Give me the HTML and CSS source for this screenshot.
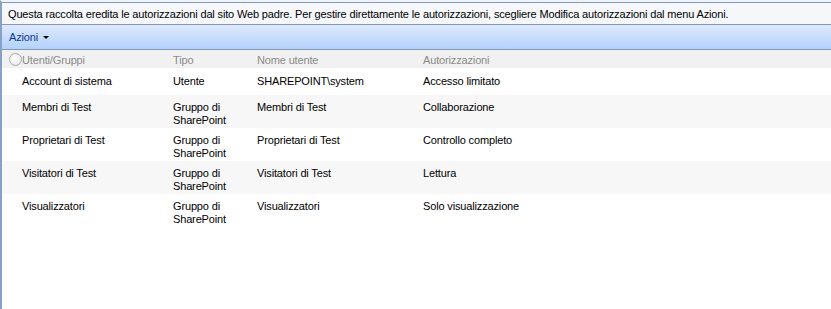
FILE: index.html
```html
<!DOCTYPE html>
<html lang="it">
<head>
<meta charset="utf-8">
<title>Autorizzazioni</title>
<link rel="stylesheet" href="styles.css">
</head>
<body>
<div class="page">
  <div class="info">Questa raccolta eredita le autorizzazioni dal sito Web padre. Per gestire direttamente le autorizzazioni, scegliere Modifica autorizzazioni dal menu Azioni.</div>
  <div class="toolbar"><span class="menu">Azioni <span class="caret"></span></span></div>
  <div class="table">
    <div class="row head">
      <div class="c1"><span class="radio"></span>Utenti/Gruppi</div>
      <div>Tipo</div>
      <div>Nome utente</div>
      <div>Autorizzazioni</div>
    </div>
    <div class="row first">
      <div class="c1">Account di sistema</div>
      <div>Utente</div>
      <div>SHAREPOINT\system</div>
      <div>Accesso limitato</div>
    </div>
    <div class="row alt">
      <div class="c1">Membri di Test</div>
      <div>Gruppo di<br>SharePoint</div>
      <div>Membri di Test</div>
      <div>Collaborazione</div>
    </div>
    <div class="row">
      <div class="c1">Proprietari di Test</div>
      <div>Gruppo di<br>SharePoint</div>
      <div>Proprietari di Test</div>
      <div>Controllo completo</div>
    </div>
    <div class="row alt">
      <div class="c1">Visitatori di Test</div>
      <div>Gruppo di<br>SharePoint</div>
      <div>Visitatori di Test</div>
      <div>Lettura</div>
    </div>
    <div class="row">
      <div class="c1">Visualizzatori</div>
      <div>Gruppo di<br>SharePoint</div>
      <div>Visualizzatori</div>
      <div>Solo visualizzazione</div>
    </div>
  </div>
</div>
</body>
</html>
```
FILE: styles.css
```css
html, body {
  margin: 0;
  padding: 0;
  background: #fff;
}
body {
  font-family: "Liberation Sans", Arial, sans-serif;
  font-size: 11px;
  letter-spacing: -0.15px;
  color: #000;
}
.page {
  width: 831px;
  height: 309px;
  box-sizing: border-box;
  border-left: 2px solid #85a2c6;
  border-top: 2px solid #eef3fa;
  overflow: hidden;
}
.info {
  height: 21px;
  line-height: 22px;
  padding-left: 6px;
  background: #f6f7fa;
  border-top: 1px solid #8198b7;
  border-bottom: 1px solid #8198b7;
  white-space: nowrap;
}
.toolbar {
  height: 24px;
  display: flex;
  align-items: center;
  padding-left: 7px;
  background: linear-gradient(#dde9fb, #b3d2fb);
  border-bottom: 1px solid #8198b7;
}
.menu {
  color: #0b3a92;
  display: inline-flex;
  align-items: center;
  gap: 5px;
}
.caret {
  width: 0;
  height: 0;
  border-left: 3px solid transparent;
  border-right: 3px solid transparent;
  border-top: 3px solid #000;
}
.row {
  display: grid;
  grid-template-columns: 151px 84px 166px 1fr;
  padding: 6px 0 1px 20px;
  line-height: 13px;
}
.row.head {
  background: #f1f1f1;
  color: #8a8a8a;
  padding: 4px 0 1px 20px;
  height: 13px;
}
.row.first {
  padding: 7px 0 7px 20px;
}
.row.alt {
  background: #f7f7f7;
}
.c1 {
  position: relative;
}
.radio {
  position: absolute;
  left: -13px;
  top: -1px;
  width: 11px;
  height: 11px;
  border-radius: 50%;
  border: 1px solid #ababab;
  background: radial-gradient(circle at 40% 35%, #ffffff, #e2e2e2);
}
```
